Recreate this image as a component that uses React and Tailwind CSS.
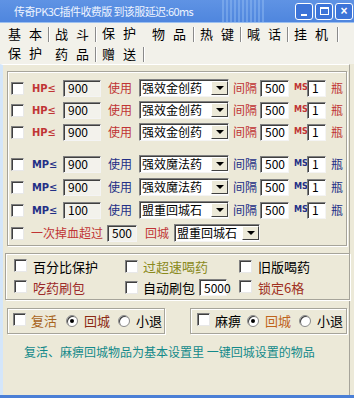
import React from "react";

const font = { fontFamily: '"Noto Sans CJK SC", "Liberation Sans", sans-serif' };
const latin = { fontFamily: '"DejaVu Sans Condensed", "DejaVu Sans", sans-serif' };

const Check = () => (
  <span className="inline-block w-[13px] h-[13px] bg-white border border-t-[#808080] border-l-[#808080] border-b-[#e8e8e8] border-r-[#e8e8e8] shadow-[inset_1px_1px_0_#404040] shrink-0" />
);

const Radio = ({ on }) => (
  <span className="w-[12px] h-[12px] rounded-full bg-white border border-[#8a8a8a] shadow-[inset_1px_1px_0_#404040] flex items-center justify-center shrink-0">
    {on && <span className="w-[4px] h-[4px] rounded-full bg-black" />}
  </span>
);

const Input = ({ v, w, gray }) => (
  <span
    className={`h-[17px] ${w} ${gray ? "bg-[#f3f2ec]" : "bg-white"} border border-t-[#808080] border-l-[#808080] border-b-[#f4f4f4] border-r-[#f4f4f4] shadow-[inset_1px_1px_0_#404040] flex items-center px-[4px] text-[12px] text-black leading-none shrink-0`}
  >
    {v}
  </span>
);

const Select = ({ v, w }) => (
  <span
    className={`h-[18px] ${w} bg-white border border-t-[#808080] border-l-[#808080] border-b-[#f4f4f4] border-r-[#f4f4f4] shadow-[inset_1px_1px_0_#404040] flex items-center justify-between pl-[2px] text-[12px] text-black leading-none shrink-0 whitespace-nowrap`}
  >
    <span>{v}</span>
    <span className="w-[17px] h-[14px] bg-[#ece9d8] border border-t-white border-l-white border-b-[#404040] border-r-[#404040] flex items-center justify-center">
      <span className="w-0 h-0 border-l-[4px] border-r-[4px] border-t-[4px] border-l-transparent border-r-transparent border-t-black" />
    </span>
  </span>
);

const Row = ({ kind, val, item }) => {
  const c = kind === "HP" ? "text-[#c03434]" : "text-[#232f86]";
  return (
    <div className={`h-[22px] flex items-center whitespace-nowrap ${c}`}>
      <span className="ml-[3px]"><Check /></span>
      <span className="ml-[8px] w-[27px] text-[11px] font-bold leading-none" style={latin}>
        {kind}<span className="font-normal">≤</span>
      </span>
      <span className="ml-[4px]"><Input v={val} w="w-[38px]" gray /></span>
      <span className="ml-[7px] text-[12px] w-[24px]">使用</span>
      <span className="ml-[7px]"><Select v={item} w="w-[90px]" /></span>
      <span className="ml-[4px] text-[12px] w-[24px]">间隔</span>
      <span className="ml-[3px]"><Input v="500" w="w-[29px]" /></span>
      <span className="ml-[5px] text-[9px] font-bold w-[13px]" style={latin}>MS</span>
      <Input v="1" w="w-[19px]" />
      <span className="ml-[5px] text-[12px]">瓶</span>
    </div>
  );
};

const Tab = ({ t, sel, w = "w-[47px]" }) => (
  <div className={`${w} h-[20px] flex items-center relative`}>
    <span className={`pl-[5px] text-[13px] tracking-[8px] whitespace-nowrap ${sel ? "-mt-[3px]" : ""}`}>{t}</span>
    {!sel && <span className="absolute right-0 top-[3px] w-[2px] h-[15px] border-l border-l-[#8a8a8a] border-r border-r-white" />}
  </div>
);

const Box = ({ cls, children }) => (
  <div className={`border border-[#a6a49a] shadow-[inset_1px_1px_0_#fff,1px_1px_0_#fff] ${cls}`}>{children}</div>
);

export default function App() {
  return (
    <div className="w-[354px] h-[398px] bg-[#ece9d8] overflow-hidden relative text-black" style={font}>
      {/* title bar */}
      <div className="h-[22px] bg-gradient-to-b from-[#5f93e4] to-[#4f86de] flex items-center relative">
        <span className="ml-[14px] text-[11px] tracking-[-0.6px] text-[#eef4ff] leading-none whitespace-nowrap">传奇PK3C插件收费版 到该服延迟:60ms</span>
        <div className="absolute left-[222px] top-0 w-[44px] h-[22px] opacity-40 bg-[linear-gradient(90deg,#9cc4f5_25%,transparent_25%,transparent_50%,#9cc4f5_50%,#9cc4f5_75%,transparent_75%)] bg-[length:8px_8px]" />
        <div className="ml-auto mr-[1px] flex gap-[2px]">
          <span className="w-[18px] h-[17px] rounded-[3px] bg-[#3d74d8] border border-white flex items-end justify-center pb-[3px]">
            <span className="w-[6px] h-[2px] bg-white" />
          </span>
          <span className="w-[18px] h-[17px] rounded-[3px] bg-[#3d74d8] border border-white flex items-center justify-center">
            <span className="w-[9px] h-[8px] border border-white border-t-2" />
          </span>
          <span className="w-[18px] h-[17px] rounded-[3px] bg-[#3d74d8] border border-white flex items-center justify-center text-white text-[12px] font-bold leading-none" style={{ fontFamily: '"Liberation Sans", sans-serif' }}>
            ×
          </span>
        </div>
      </div>
      <div className="h-[1px] bg-[#9cc0f0]" />

      {/* tabs */}
      <div className="pl-[3px] pt-[1px] bg-[#f2f1ea]">
        <div className="flex">
          <Tab t="基本" />
          <Tab t="战斗" />
          <Tab t="保护" sel w="w-[50px]" />
          <Tab t="物品" w="w-[48px]" />
          <Tab t="热键" />
          <Tab t="喊话" />
          <Tab t="挂机" w="w-[50px]" />
        </div>
        <div className="flex">
          <Tab t="保护" sel />
          <Tab t="药品" />
          <Tab t="赠送" w="w-[48px]" />
        </div>
      </div>

      {/* page */}
      <div className="border-t border-t-white border-r border-r-[#a6a49a] w-[350px] pl-[7px] pt-[6px] h-[333px] flex flex-col border-l-[3px] border-l-[#d4e6fa]">
        <Box cls="w-[340px] -ml-[3px] pb-[1px] pt-[5px]">
          <Row kind="HP" val="900" item="强效金创药" />
          <Row kind="HP" val="900" item="强效金创药" />
          <Row kind="HP" val="900" item="强效金创药" />
          <div className="h-[10px]" />
          <div className="flex flex-col gap-[1px]">
            <Row kind="MP" val="900" item="强效魔法药" />
            <Row kind="MP" val="900" item="强效魔法药" />
            <Row kind="MP" val="100" item="盟重回城石" />
            <div className="h-[22px] flex items-center text-[#c03434] whitespace-nowrap">
              <span className="ml-[3px]"><Check /></span>
              <span className="ml-[7px] text-[12px] w-[72px]">一次掉血超过</span>
              <span className="ml-[4px]"><Input v="500" w="w-[30px]" gray /></span>
              <span className="ml-[8px] text-[12px] w-[24px]">回城</span>
              <span className="ml-[5px]"><Select v="盟重回城石" w="w-[86px]" /></span>
            </div>
          </div>
        </Box>

        <Box cls="w-[345px] -ml-[5px] mt-[7px] pt-[2px] pb-[1px]">
          <div className="h-[21px] flex items-center text-[13px] whitespace-nowrap">
            <span className="ml-[8px]"><Check /></span>
            <span className="ml-[6px] w-[92px]">百分比保护</span>
            <Check />
            <span className="ml-[5px] w-[96px] text-[#8a8a1c]">过超速喝药</span>
            <Check />
            <span className="ml-[6px]">旧版喝药</span>
          </div>
          <div className="h-[21px] flex items-center text-[13px] whitespace-nowrap">
            <span className="ml-[8px]"><Check /></span>
            <span className="ml-[6px] w-[92px] text-[#9c2a2a]">吃药刷包</span>
            <Check />
            <span className="ml-[5px] w-[56px]">自动刷包</span>
            <Input v="5000" w="w-[28px]" />
            <span className="ml-[12px]"><Check /></span>
            <span className="ml-[6px] text-[#a03020]">锁定6格</span>
          </div>
        </Box>

        <div className="flex mt-[8px] -ml-[3px]">
          <Box cls="w-[158px] h-[26px] flex items-center text-[13px] whitespace-nowrap">
            <span className="ml-[5px]"><Check /></span>
            <span className="ml-[5px] text-[#a8641c]">复活</span>
            <span className="ml-[9px]"><Radio on /></span>
            <span className="ml-[6px] text-[#8c2a14]">回城</span>
            <span className="ml-[8px]"><Radio /></span>
            <span className="ml-[6px]">小退</span>
          </Box>
          <Box cls="w-[157px] h-[26px] ml-[25px] flex items-center text-[13px] whitespace-nowrap">
            <span className="ml-[6px]"><Check /></span>
            <span className="ml-[5px]">麻痹</span>
            <span className="ml-[6px]"><Radio on /></span>
            <span className="ml-[6px] text-[#c0641c]">回城</span>
            <span className="ml-[8px]"><Radio /></span>
            <span className="ml-[6px]">小退</span>
          </Box>
        </div>

        <div className="mt-[9px] ml-[14px] text-[12px] text-[#138a8a] whitespace-nowrap">
          复活、麻痹回城物品为基本设置里 一键回城设置的物品
        </div>
      </div>
      <div className="absolute left-0 bottom-0 w-full h-[3px] bg-[#4a7fd6]" />
    </div>
  );
}
